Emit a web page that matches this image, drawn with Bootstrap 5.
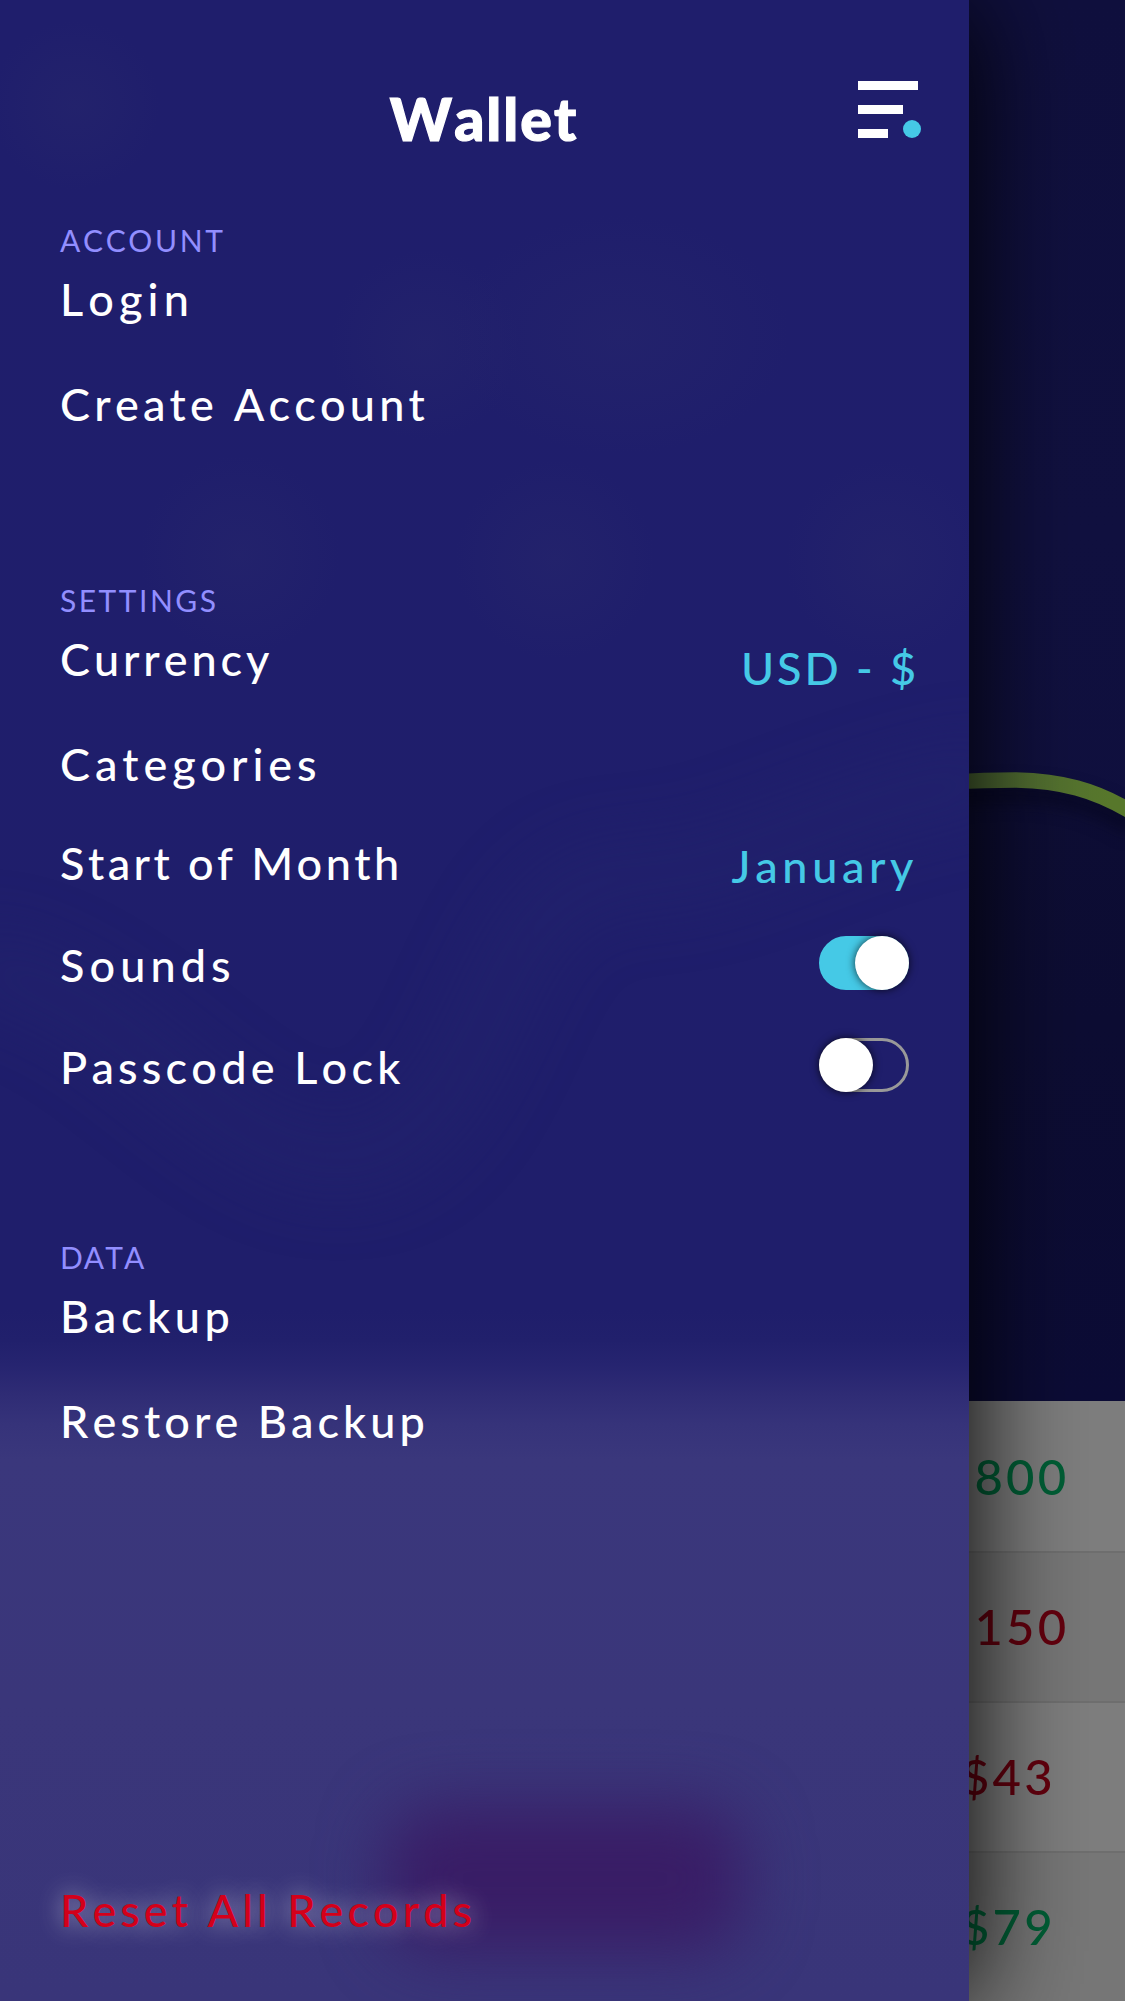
<!DOCTYPE html>
<html lang="en">
<head>
<meta charset="utf-8">
<meta name="viewport" content="width=device-width, initial-scale=1">
<title>Wallet</title>
<link href="https://cdn.jsdelivr.net/npm/bootstrap@5.3.0/dist/css/bootstrap.min.css" rel="stylesheet">
<style>
  body { font-family: Lato, "Open Sans", sans-serif; font-kerning: none; background: #0d0d33; }
  .screen { width: 1125px; height: 2001px; }

  /* dimmed page behind the drawer */
  .chart-area { height: 1401px; background: linear-gradient(#10103e, #111140 38%, #0f0f3c 100%); }
  .chart-area svg { display: block; }
  .entry { height: 150px; padding-left: 961px; background: #7e7e7e; border-top: 2px solid #6f6f6f; font-size: 49px; font-weight: 500; letter-spacing: 3.2px; }
  .entry:first-child { border-top-color: #7e7e7e; }
  .entry:nth-child(even) { background: #777; }
  .entry.long { padding-left: 974.5px; }
  .income { color: #005f36; }
  .expense { color: #64000e; }

  /* drawer */
  .drawer { width: 969px; box-shadow: 6px 0 100px rgba(0, 0, 0, .92); background: linear-gradient(#1f1e6c 0, #1f1e6b 1310px, #21206c 1340px, #262470 1365px, #2f2c75 1395px, #36337a 1425px, #3a377c 1460px, #3a367a 1700px, #393579 100%); }
  .glow { inset: 0; pointer-events: none; }
  .drawer-head { height: 222px; padding: 0 48px 0 47px; }
  .drawer-title { font-size: 59px; font-weight: 900; letter-spacing: 2px; line-height: 72px; color: #fff; padding-top: 83px; -webkit-text-stroke: 1.2px #fff; }
  .menu-icon { margin-top: 81px; width: 63px; height: 57px; }
  .group { padding: 0 60px; color: #fff; font-size: 45px; font-weight: 500; letter-spacing: 4.2px; white-space: nowrap; }
  .group-label { font-size: 30px; font-weight: 400; line-height: 36px; letter-spacing: 2.65px; color: #928eff; margin: 0 0 13px; }
  .group-settings { margin-top: 152px; }
  .group-data { margin-top: 147px; }
  .item { height: 54px; line-height: 57px; }
  .item.gap-md, .item.gap-sm { line-height: 59px; }
  .picked { color: #45c9e6; }
  .gap-lg { margin-top: 51px; }
  .gap-md { margin-top: 44px; }
  .gap-sm { margin-top: 48px; }
  .lowered-9 { padding-top: 9px; margin-right: -10px; letter-spacing: 2.95px; }
  .lowered-3 { padding-top: 3px; margin-right: -9px; letter-spacing: 4.6px; }
  .toggle { width: 90px; height: 54px; border-radius: 27px; border: 3px solid #999; }
  .toggle::before { content: ""; display: block; width: 54px; height: 54px; margin: -3px; border-radius: 50%; background: #fff; box-shadow: 0 0 9px rgba(0, 0, 0, .75); }
  .toggle.on { background: #45c9e6; border-color: #45c9e6; }
  .toggle.on::before { margin-left: 33px; }
  .danger-item { color: #d4001a; letter-spacing: 4.04px; margin-bottom: 65px; text-shadow: 0 0 24px rgba(255, 255, 255, .6); }
</style>
</head>
<body>
<div class="screen position-relative overflow-hidden">
  <main class="d-flex flex-column h-100">
    <div class="chart-area flex-shrink-0">
      <svg width="1125" height="1401" viewBox="0 0 1125 1401" aria-hidden="true">
        <defs>
          <filter id="soft" x="-20%" y="-100%" width="140%" height="300%" color-interpolation-filters="sRGB"><feGaussianBlur stdDeviation="9"/></filter>
          <linearGradient id="under" x1="0" y1="770" x2="0" y2="1401" gradientUnits="userSpaceOnUse">
            <stop offset="0" stop-color="#0e0e36"/><stop offset=".4" stop-color="#0d0d33"/><stop offset="1" stop-color="#0c0c36"/>
          </linearGradient>
          <linearGradient id="line" x1="969" y1="0" x2="1110" y2="0" gradientUnits="userSpaceOnUse">
            <stop offset="0" stop-color="#4f6a36"/><stop offset="1" stop-color="#58782c"/>
          </linearGradient>
        </defs>
        <path d="M900 790C945 781 985 780 1015 780C1060 781 1095 789 1135 814V1401H900Z" fill="url(#under)"/>
        <path d="M900 803C945 795 985 793 1015 793C1060 794 1095 802 1135 827" fill="none" stroke="#06061c" stroke-opacity=".7" stroke-width="16" filter="url(#soft)"/>
        <path d="M900 788C945 781 985 780 1015 780C1060 781 1095 789 1135 814" fill="none" stroke="url(#line)" stroke-width="15.5"/>
      </svg>
    </div>
    <div class="flex-shrink-0">
      <div class="entry long income d-flex align-items-center">800</div>
      <div class="entry long expense d-flex align-items-center">150</div>
      <div class="entry expense d-flex align-items-center">$43</div>
      <div class="entry income d-flex align-items-center">$79</div>
    </div>
  </main>

  <aside class="drawer position-absolute top-0 start-0 h-100">
    <svg class="glow position-absolute" width="969" height="2001" viewBox="0 0 969 2001" aria-hidden="true">
      <defs>
        <filter id="haze" x="-50%" y="-100%" width="200%" height="300%" color-interpolation-filters="sRGB"><feGaussianBlur stdDeviation="32"/></filter>
        <filter id="wide" x="-30%" y="-50%" width="160%" height="200%" color-interpolation-filters="sRGB"><feGaussianBlur stdDeviation="34"/></filter>
        <radialGradient id="spot">
          <stop offset="0" stop-color="#28286c" stop-opacity=".4"/><stop offset=".5" stop-color="#28286c" stop-opacity=".22"/><stop offset="1" stop-color="#28286c" stop-opacity="0"/>
        </radialGradient>
      </defs>
      <g fill="url(#spot)">
        <circle cx="75" cy="105" r="85"/>
        <circle cx="425" cy="345" r="95"/>
        <ellipse cx="620" cy="335" rx="170" ry="120"/>
        <circle cx="240" cy="555" r="100"/>
        <circle cx="555" cy="560" r="100"/>
        <circle cx="885" cy="560" r="100"/>
      </g>
      <path d="M-40 965C120 975 220 1170 350 1160C500 1140 480 880 620 875C740 880 820 800 1010 775" fill="none" stroke="#24266d" stroke-opacity=".5" stroke-width="50" filter="url(#wide)"/>
      <rect x="386" y="1806" width="358" height="146" rx="50" fill="#391d66" filter="url(#haze)"/>
    </svg>

    <div class="position-relative d-flex flex-column h-100">
      <header class="drawer-head d-flex justify-content-between flex-shrink-0">
        <span class="menu-icon invisible"></span>
        <h1 class="drawer-title m-0">Wallet</h1>
        <svg class="menu-icon" viewBox="0 0 63 57" role="img" aria-label="Menu">
          <path d="M0 0h60v9H0zM0 24h45v9H0zM0 48h30v9H0z" fill="#fff"/>
          <circle cx="54" cy="48" r="9" fill="#45c9e6"/>
        </svg>
      </header>

      <section class="group">
        <h2 class="group-label">ACCOUNT</h2>
        <div class="item" style="letter-spacing:5.1px">Login</div>
        <div class="item gap-lg">Create Account</div>
      </section>

      <section class="group group-settings">
        <h2 class="group-label" style="letter-spacing:2.5px">SETTINGS</h2>
        <div class="item d-flex justify-content-between">
          <span style="letter-spacing:3.9px">Currency</span><span class="picked lowered-9">USD - $</span>
        </div>
        <div class="item gap-lg" style="letter-spacing:4.9px">Categories</div>
        <div class="item gap-md d-flex justify-content-between">
          <span style="letter-spacing:3.44px">Start of Month</span><span class="picked lowered-3">January</span>
        </div>
        <div class="item gap-sm d-flex justify-content-between">
          <span style="letter-spacing:5.06px">Sounds</span><span class="toggle on"></span>
        </div>
        <div class="item gap-sm d-flex justify-content-between">
          <span>Passcode Lock</span><span class="toggle"></span>
        </div>
      </section>

      <section class="group group-data">
        <h2 class="group-label" style="letter-spacing:1.05px">DATA</h2>
        <div class="item" style="letter-spacing:4.6px">Backup</div>
        <div class="item gap-lg" style="letter-spacing:4.05px">Restore Backup</div>
      </section>

      <section class="group mt-auto">
        <div class="item danger-item">Reset All Records</div>
      </section>
    </div>
  </aside>
</div>
<script src="https://cdn.jsdelivr.net/npm/bootstrap@5.3.0/dist/js/bootstrap.bundle.min.js"></script>
</body>
</html>
